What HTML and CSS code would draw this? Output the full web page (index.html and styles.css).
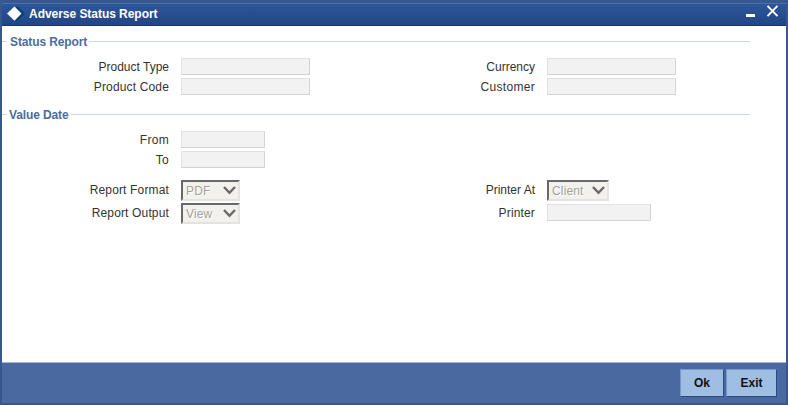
FILE: index.html
```html
<!DOCTYPE html>
<html lang="en">
<head>
<meta charset="utf-8">
<title>Adverse Status Report</title>
<link rel="stylesheet" href="styles.css">
</head>
<body>
<div class="window">
  <header class="titlebar">
    <svg class="logo" width="20" height="18" viewBox="0 0 20 18">
      <path d="M10 1.500H12L19 8.500L11 16H8Z" fill="#0b3f70"/>
      <path d="M8.500 1.500L15.500 8.500L8.500 15.800L1 8.500Z" fill="#fff"/>
    </svg>
    <h1 class="title">Adverse Status Report</h1>
    <svg class="controls" width="34" height="14" viewBox="0 0 34 14">
      <path d="M0 9H9V12H0Z" fill="#fff"/>
      <path d="M21.500 0.900L31.500 11.100M31.500 0.900L21.500 11.100" stroke="#fff" stroke-width="2" fill="none"/>
    </svg>
  </header>
  <main class="content">
    <section class="status">
      <h2 class="legend"><span class="legend-text">Status Report</span></h2>
      <div class="fields">
        <label class="label">Product Type</label><span class="cell"><span class="input"></span></span>
        <label class="label">Currency</label><span class="cell"><span class="input"></span></span>
        <label class="label loose">Product Code</label><span class="cell"><span class="input"></span></span>
        <label class="label looser">Customer</label><span class="cell"><span class="input"></span></span>
      </div>
    </section>
    <section class="dates">
      <h2 class="legend"><span class="legend-text">Value Date</span></h2>
      <div class="fields">
        <label class="label looser">From</label><span class="cell"><span class="input date"></span></span>
        <span></span><span></span>
        <label class="label looser">To</label><span class="cell"><span class="input date"></span></span>
        <span></span><span></span>
      </div>
    </section>
    <div class="fields output">
      <label class="label loose">Report Format</label>
      <span class="cell"><span class="select">PDF<svg class="arrow" width="13" height="9" viewBox="0 0 13 9"><path d="M1 1L6.500 6.800L12 1"/></svg></span></span>
      <label class="label">Printer At</label>
      <span class="cell"><span class="select wide">Client<svg class="arrow" width="13" height="9" viewBox="0 0 13 9"><path d="M1 1L6.500 6.800L12 1"/></svg></span></span>
      <label class="label loose">Report Output</label>
      <span class="cell"><span class="select">View<svg class="arrow" width="13" height="9" viewBox="0 0 13 9"><path d="M1 1L6.500 6.800L12 1"/></svg></span></span>
      <label class="label loose">Printer</label>
      <span class="cell"><span class="input printer"></span></span>
    </div>
  </main>
  <footer class="footer">
    <button class="button ok">Ok</button>
    <button class="button exit">Exit</button>
  </footer>
</div>
</body>
</html>
```
FILE: styles.css
```css
* { box-sizing: border-box; }
body {
  margin: 0;
  font: 12px "Liberation Sans", Arial, sans-serif;
  color: #333;
}
.window {
  display: flex;
  flex-direction: column;
  width: 788px;
  height: 405px;
  border: 2px solid #38578f;
  border-top-width: 3px;
  background: #fff;
}
.titlebar {
  display: flex;
  flex: none;
  align-items: center;
  height: 23px;
  padding: 0 6px 0 4px;
  border-top: 1px solid #4870ab;
  border-bottom: 1px solid #19376f;
  background: linear-gradient(#2c569b, #234584);
}
.logo { flex: none; margin-top: -2px; }
.title {
  flex: 1;
  margin: -2px 0 0 3px;
  font-size: 12px;
  line-height: 20px;
  letter-spacing: -0.04px;
  color: #fff;
}
.controls { flex: none; margin-top: -5px; }
.content { flex: 1; }
.status { height: 73px; padding-top: 8px; }
.dates { height: 78px; padding-top: 8px; }
.legend {
  display: flex;
  align-items: center;
  width: 748px;
  height: 15px;
  margin: 0;
  font-size: 12px;
  line-height: 15px;
  letter-spacing: -0.12px;
  color: #4c6ca0;
}
.legend-text { padding-top: 2px; }
.legend::before,
.legend::after {
  content: "";
  height: 1px;
  background: #cbd7e4;
}
.legend::before { width: 5px; margin-right: 3px; }
.dates .legend::before { margin-right: 2px; }
.legend::after { flex: 1; margin-left: 2px; }
.fields {
  display: grid;
  grid-template-columns: 167px 188px 178px 190px;
  grid-auto-rows: 20px;
  padding-top: 7px;
}
.fields.output {
  grid-auto-rows: 23px;
  padding-top: 2px;
}
.label {
  align-self: center;
  padding-top: 2px;
  text-align: right;
}
.output .label { padding-top: 0; margin-top: -2px; }
.loose { letter-spacing: 0.15px; }
.looser { letter-spacing: 0.3px; }
.cell {
  display: flex;
  align-items: center;
  padding-left: 12px;
}
.input {
  width: 129px;
  height: 17px;
  border: 1px solid #e2e2e2;
  border-right-color: #d3d3d3;
  border-bottom-color: #d3d3d3;
  background: #f2f2f2;
}
.input.date { width: 84px; }
.input.printer { width: 104px; margin-top: -2px; }
.select {
  display: flex;
  justify-content: space-between;
  align-items: center;
  width: 59px;
  height: 21px;
  padding: 0 2px 0 3px;
  border: 2px solid #e3e3e0;
  border-top-color: #696969;
  border-left-color: #696969;
  background: #f2f1ec;
  color: #a3a29c;
  letter-spacing: 0.15px;
  text-shadow: 1px 1px #fff;
}
.select.wide { width: 62px; }
.arrow {
  fill: none;
  stroke: #696969;
  stroke-width: 2.4;
}
.footer {
  display: flex;
  flex: none;
  justify-content: flex-end;
  gap: 2px;
  height: 41px;
  padding: 6px 9px 0 0;
  border-top: 1px solid #a5b7d3;
  background: #4a69a1;
}
.button {
  height: 28px;
  padding: 0;
  border: 1px solid #7898c8;
  border-right-color: #2d4a7c;
  border-bottom-color: #2d4a7c;
  background: #a0bde3;
  font: bold 12px "Liberation Sans", Arial, sans-serif;
  color: #111;
}
.ok { width: 44px; }
.exit { width: 51px; }
```
